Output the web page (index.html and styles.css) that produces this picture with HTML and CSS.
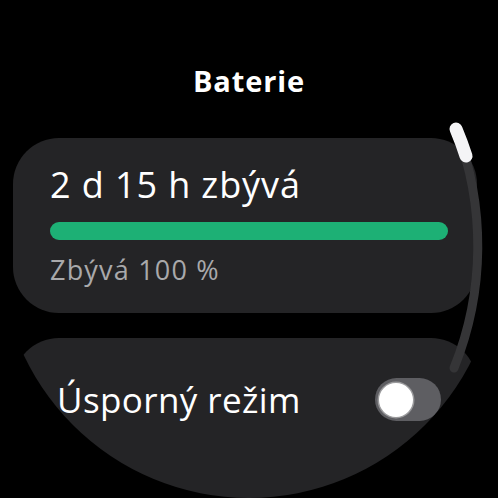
FILE: index.html
```html
<!DOCTYPE html>
<html>
<head>
<meta charset="utf-8">
<link rel="stylesheet" href="styles.css">
</head>
<body>
<div class="screen">
  <div class="title">Baterie</div>
  <div class="card battery">
    <div class="remain">2 d 15 h zbývá</div>
    <div class="bar"><div class="fill" style="width:100%"></div></div>
    <div class="percent">Zbývá 100 %</div>
  </div>
  <div class="card saver">
    <div class="label">Úsporný režim</div>
    <div class="toggle"><div class="knob"></div></div>
  </div>
  <svg class="scroll" width="498" height="498" viewBox="0 0 498 498">
    <path d="M 456 129 A 325 325 0 0 1 454 368" fill="none" stroke="#353537" stroke-width="9" stroke-linecap="round"/>
    <path d="M 456 129 A 325 325 0 0 1 466 156" fill="none" stroke="#f4f4f6" stroke-width="13" stroke-linecap="round"/>
  </svg>
</div>
</body>
</html>
```
FILE: styles.css
```css
html, body {
  margin: 0;
  padding: 0;
  background: #000;
}
.screen {
  position: relative;
  width: 498px;
  height: 498px;
  border-radius: 50%;
  overflow: hidden;
  background: #000;
  font-family: "Open Sans", Roboto, sans-serif;
  color: #fff;
}
.title {
  padding-top: 61px;
  height: 40px;
  line-height: 40px;
  text-align: center;
  font-size: 29px;
  font-weight: 700;
  letter-spacing: 0.9px;
}
.card {
  background: #242426;
  margin-left: 13px;
  width: 464px;
  border-radius: 46px;
  box-sizing: border-box;
}
.battery {
  margin-top: 37px;
  height: 175px;
  padding: 24px 0 0 37px;
}
.remain {
  font-size: 36px;
  line-height: 46px;
  height: 46px;
  letter-spacing: 0.9px;
}
.bar {
  margin-top: 14px;
  width: 398px;
  height: 18px;
  border-radius: 9px;
  background: #2c2c2e;
}
.fill {
  height: 100%;
  border-radius: 9px;
  background: #1db075;
}
.percent {
  margin-top: 13px;
  font-size: 27px;
  line-height: 34px;
  color: #a9a9ab;
  letter-spacing: 1.2px;
}
.saver {
  margin-top: 25px;
  height: 200px;
  padding: 38px 36px 0 44px;
  display: flex;
  justify-content: space-between;
  align-items: flex-start;
}
.label {
  font-size: 35px;
  line-height: 48px;
  letter-spacing: 0.4px;
}
.toggle {
  margin-top: 2px;
  width: 66px;
  height: 43px;
  border-radius: 22px;
  background: #5e5e62;
  display: flex;
  align-items: center;
  padding-left: 4px;
  box-sizing: border-box;
}
.knob {
  width: 34px;
  height: 34px;
  border-radius: 50%;
  background: #fff;
  box-shadow: 0 0 0 1.5px #9a9a9c;
}
.scroll {
  position: absolute;
  left: 0;
  top: 0;
}
```
